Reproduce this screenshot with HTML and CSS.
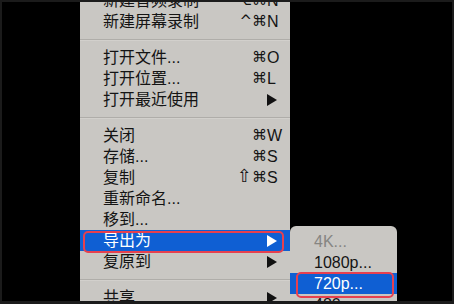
FILE: index.html
```html
<!DOCTYPE html>
<html>
<head>
<meta charset="utf-8">
<link rel="stylesheet" href="styles.css">
</head>
<body>
<div class="frame">
  <div class="screen">
    <div class="menu">
      <div class="item"><span class="label">新建音频录制</span><span class="mods">⌥⌘</span><span class="k">N</span></div>
      <div class="item"><span class="label">新建屏幕录制</span><span class="mods">^⌘</span><span class="k">N</span></div>
      <div class="sep"></div>
      <div class="item"><span class="label">打开文件...</span><span class="mods">⌘</span><span class="k">O</span></div>
      <div class="item"><span class="label">打开位置...</span><span class="mods">⌘</span><span class="k">L</span></div>
      <div class="item"><span class="label">打开最近使用</span><span class="k"><svg class="arrow" width="10" height="12" viewBox="0 0 10 12"><polygon points="0,0 10,6 0,12"/></svg></span></div>
      <div class="sep"></div>
      <div class="item"><span class="label">关闭</span><span class="mods">⌘</span><span class="k">W</span></div>
      <div class="item"><span class="label">存储...</span><span class="mods">⌘</span><span class="k">S</span></div>
      <div class="item"><span class="label">复制</span><span class="mods"><span class="shift">⇧</span>⌘</span><span class="k">S</span></div>
      <div class="item"><span class="label">重新命名...</span></div>
      <div class="item"><span class="label">移到...</span></div>
      <div class="item active marked"><span class="label">导出为</span><span class="k"><svg class="arrow" width="10" height="12" viewBox="0 0 10 12"><polygon points="0,0 10,6 0,12"/></svg></span></div>
      <div class="item"><span class="label">复原到</span><span class="k"><svg class="arrow" width="10" height="12" viewBox="0 0 10 12"><polygon points="0,0 10,6 0,12"/></svg></span></div>
      <div class="sep"></div>
      <div class="item"><span class="label">共享</span><span class="k"><svg class="arrow" width="10" height="12" viewBox="0 0 10 12"><polygon points="0,0 10,6 0,12"/></svg></span></div>
    </div>
    <div class="submenu">
      <div class="item disabled"><span class="label">4K...</span></div>
      <div class="item"><span class="label">1080p...</span></div>
      <div class="item active marked"><span class="label">720p...</span></div>
      <div class="item"><span class="label">480p...</span></div>
    </div>
  </div>
</div>
</body>
</html>
```
FILE: styles.css
```css
html, body {
  margin: 0;
  padding: 0;
  background: #000;
}
.frame {
  width: 454px;
  height: 304px;
  box-sizing: border-box;
  border: 2px solid #1b1b1b;
  border-bottom-width: 3px;
  background: #000;
  overflow: hidden;
}
.screen {
  position: relative;
  width: 100%;
  height: 100%;
  overflow: hidden;
}
.menu {
  position: absolute;
  left: 78px;
  top: -12px;
  width: 210px;
  background: #c9c7c3;
  font-family: "Liberation Sans", "Noto Sans CJK SC", sans-serif;
  font-size: 16px;
  color: #141414;
}
.submenu {
  position: absolute;
  left: 288px;
  top: 224px;
  width: 107px;
  padding-top: 5px;
  background: #c9c7c3;
  border-radius: 6px 6px 0 0;
  font-family: "Liberation Sans", "Noto Sans CJK SC", sans-serif;
  font-size: 16px;
  color: #141414;
}
.item {
  position: relative;
  display: flex;
  align-items: center;
  height: 21px;
  line-height: 21px;
  padding: 0 7px 0 23px;
}
.submenu .item {
  padding-left: 24px;
}
.label {
  flex: 1;
  white-space: nowrap;
}
.mods {
  font-family: "DejaVu Sans", sans-serif;
  font-size: 15px;
  text-align: right;
  white-space: nowrap;
}
.shift {
  font-size: 18px;
  line-height: 15px;
}
.k {
  width: 16px;
  display: flex;
  align-items: center;
  font-family: "Liberation Sans", sans-serif;
  font-size: 16px;
}
.arrow {
  fill: #111;
}
.sep {
  height: 15px;
  display: flex;
  align-items: center;
}
.sep::before {
  content: "";
  flex: 1;
  height: 1px;
  background: #afada9;
  box-shadow: 0 1px 0 #d2d0cc;
}
.item.active {
  background: #0f5fd3;
  color: #fff;
}
.item.active .arrow {
  fill: #fff;
}
.item.disabled {
  color: #868582;
}
.menu .item.marked::after {
  content: "";
  position: absolute;
  left: 3px;
  right: 6px;
  top: 1px;
  bottom: -2px;
  border: 2.5px solid #e6404f;
  border-radius: 5px;
}
.submenu .item.marked::after {
  content: "";
  position: absolute;
  left: 6px;
  right: 3px;
  top: -1px;
  bottom: -4px;
  border: 2.5px solid #e6404f;
  border-radius: 5px;
}
```
